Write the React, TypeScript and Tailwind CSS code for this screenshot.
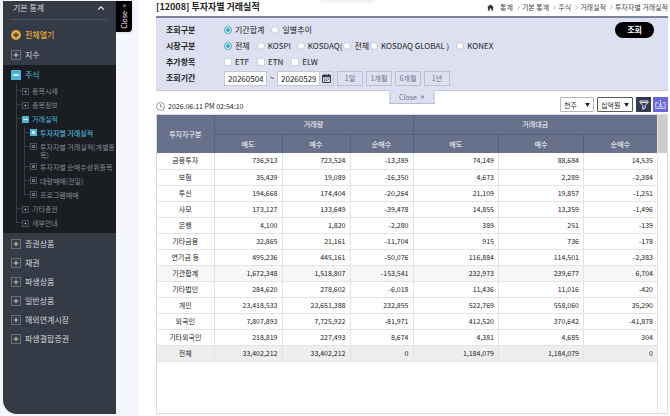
import { useState } from "react";
import type { ReactNode } from "react";
import { ChevronRight, ChevronUp } from "lucide-react";

// 상품군 메뉴
const BOTTOM_MENUS = ["증권상품", "채권", "파생상품", "일반상품", "해외연계시장", "파생결합증권"];

const TRADE_MENUS = [
  "투자자별 거래실적",
  "투자자별 거래실적(개별종목)",
  "투자자별 순매수상위종목",
  "대량매매(전일)",
  "프로그램매매",
];

const BREADCRUMBS = ["통계", "기본 통계", "주식", "거래실적", "투자자별 거래실적"];

const PERIODS = ["1일", "1개월", "6개월", "1년"];

// 투자자구분, 거래량(매도/매수/순매수), 거래대금(매도/매수/순매수)
const ROWS = [
  ["금융투자", "736,913", "723,524", "-13,389", "74,149", "88,684", "14,535"],
  ["보험", "35,439", "19,089", "-16,350", "4,673", "2,289", "-2,384"],
  ["투신", "194,668", "174,404", "-20,264", "21,109", "19,857", "-1,251"],
  ["사모", "173,127", "133,649", "-39,478", "14,855", "13,359", "-1,496"],
  ["은행", "4,100", "1,820", "-2,280", "389", "251", "-139"],
  ["기타금융", "32,865", "21,161", "-11,704", "915", "736", "-178"],
  ["연기금 등", "495,236", "445,161", "-50,076", "116,884", "114,501", "-2,383"],
  ["기관합계", "1,672,348", "1,518,807", "-153,541", "232,973", "239,677", "6,704"],
  ["기타법인", "284,620", "278,602", "-6,018", "11,436", "11,016", "-420"],
  ["개인", "23,418,533", "23,651,388", "232,855", "522,769", "558,060", "35,290"],
  ["외국인", "7,807,893", "7,725,922", "-81,971", "412,520", "370,642", "-41,878"],
  ["기타외국인", "218,819", "227,493", "8,674", "4,381", "4,685", "304"],
  ["전체", "33,402,212", "33,402,212", "0", "1,184,079", "1,184,079", "0"],
];

function PlusBox() {
  return (
    <svg viewBox="0 0 10 10" className="size-[10px] shrink-0" fill="none">
      <rect x="0.5" y="0.5" width="9" height="9" stroke="#69707e" />
      <path d="M2.5 5h5M5 2.5v5" stroke="#c3c7cf" />
    </svg>
  );
}

function MinusBox({ className }: { className: string }) {
  return (
    <svg viewBox="0 0 10 10" className={`shrink-0 ${className}`}>
      <rect width="10" height="10" rx="0.5" fill="#4db4d6" />
      <rect x="2" y="4.3" width="6" height="1.4" fill="#fff" />
    </svg>
  );
}

function DotBox() {
  return (
    <svg viewBox="0 0 7 7" className="size-[7px] shrink-0" fill="none">
      <rect x="0.5" y="0.5" width="6" height="6" stroke="#4b5263" />
      <rect x="2.7" y="2.7" width="1.6" height="1.6" fill="#b9bdc6" />
    </svg>
  );
}

function PageBox({ active }: { active: boolean }) {
  return (
    <svg viewBox="0 0 7 7" className="size-[7px] shrink-0" fill="none">
      <rect x="0.5" y="0.5" width="6" height="6" fill={active ? "#4db4d6" : "none"} stroke={active ? "#4db4d6" : "#4b5263"} />
      <path d="M2 2.5h3M2 3.5h3M2 4.5h3" stroke={active ? "#fff" : "#8d93a0"} strokeWidth="0.7" />
    </svg>
  );
}

// 트리 연결선이 붙는 메뉴 한 줄
function TreeItem({ last, children }: { last?: boolean; children: ReactNode }) {
  return (
    <li className="flex">
      <span className="flex w-[6px] shrink-0 flex-col">
        <span className="h-[7px] border-b border-l border-[#363c48]" />
        {!last && <span className="flex-1 border-l border-[#363c48]" />}
      </span>
      <div className="min-w-0 flex-1">{children}</div>
    </li>
  );
}

function Sidebar() {
  return (
    <nav className="flex w-[113px] flex-col rounded-bl-[14px] bg-[#343a46] text-[8px] leading-[10px] text-[#d5d8de]">
      <button className="mx-2 flex h-[19px] items-center justify-between border-b border-[#4a505c] pr-[2px] pb-[4px] pl-[2px] text-left">
        기본 통계
        <ChevronUp className="size-[10px]" strokeWidth={3} />
      </button>
      <a href="#all" className="mt-[4px] flex h-[21px] items-center gap-1 pl-2 font-medium text-[#e5aa3c]">
        <svg viewBox="0 0 10 10" className="size-[10px]">
          <circle cx="5" cy="5" r="5" fill="#e5aa3c" />
          <path d="M2.4 5h5.2M5 2.4v5.2" stroke="#343a46" strokeWidth="1.3" />
        </svg>
        전체열기
      </a>
      <a href="#index" className="flex h-5 items-center gap-1 pl-2">
        <PlusBox />
        지수
      </a>

      {/* 펼쳐진 주식 메뉴 */}
      <div className="bg-[#1a1d22] pt-px pb-[3px] text-[7px] text-[#868b95]">
        <a href="#stock" className="flex h-[18px] items-center gap-1 pl-2 text-[8px] text-[#4db4d6]">
          <MinusBox className="size-[10px]" />
          주식
        </a>
        <ul className="pl-[13px]">
          {["종목시세", "종목정보"].map((name) => (
            <TreeItem key={name}>
              <a href="#item" className="flex h-[14px] items-center gap-[3px]">
                <DotBox />
                {name}
              </a>
            </TreeItem>
          ))}
          <TreeItem>
            <a href="#trade" className="flex h-[14px] items-center gap-[3px] text-[#4db4d6]">
              <MinusBox className="size-[7px]" />
              거래실적
            </a>
            <ul className="pl-[2px]">
              {TRADE_MENUS.map((name, i) => (
                <TreeItem key={name} last={i === TRADE_MENUS.length - 1}>
                  <a
                    href="#trade-item"
                    className={
                      i === 0
                        ? "flex min-h-[14px] gap-[3px] pt-[3px] leading-[8px] font-medium text-[#4db4d6]"
                        : "flex min-h-[14px] gap-[3px] pt-[3px] pb-px leading-[8px]"
                    }
                  >
                    <PageBox active={i === 0} />
                    <span className="break-all">{name}</span>
                  </a>
                </TreeItem>
              ))}
            </ul>
          </TreeItem>
          {["기타증권", "세부안내"].map((name, i) => (
            <TreeItem key={name} last={i === 1}>
              <a href="#etc" className="flex h-[14px] items-center gap-[3px]">
                <DotBox />
                {name}
              </a>
            </TreeItem>
          ))}
        </ul>
      </div>

      <ul className="space-y-[9px] pt-[6px]">
        {BOTTOM_MENUS.map((name) => (
          <li key={name}>
            <a href="#menu" className="flex items-center gap-1 pl-2">
              <PlusBox />
              {name}
            </a>
          </li>
        ))}
      </ul>
    </nav>
  );
}

function Radio({ name, label, defaultChecked, className }: { name: string; label: string; defaultChecked?: boolean; className?: string }) {
  return (
    <label className={`flex items-center gap-[3px] whitespace-nowrap ${className ?? ""}`}>
      <input
        type="radio"
        name={name}
        defaultChecked={defaultChecked}
        className="size-2 shrink-0 appearance-none rounded-full border border-[#c3c7d6] bg-white checked:border-[#56b5cd] checked:bg-[#35a5c3] checked:shadow-[inset_0_0_0_1px_white]"
      />
      {label}
    </label>
  );
}

function Field({ label, children }: { label: string; children: ReactNode }) {
  return (
    <div role="group" aria-label={label} className="flex h-4 items-center">
      <span className="w-[58px] shrink-0 font-bold">{label}</span>
      {children}
    </div>
  );
}

function UnitSelect({ label, options, className }: { label: string; options: string[]; className: string }) {
  return (
    <div className="relative">
      <select aria-label={label} className={`h-[15px] appearance-none rounded-[1px] border bg-white pl-[3px] text-[7px] leading-[12px] ${className}`}>
        {options.map((o) => (
          <option key={o}>{o}</option>
        ))}
      </select>
      <svg viewBox="0 0 6 5" className="pointer-events-none absolute top-[6px] right-1 h-1 w-[5px]">
        <path d="M0 0h6L3 5z" fill="#222" />
      </svg>
    </div>
  );
}

function SearchPanel() {
  const [from, setFrom] = useState("20260504");
  const [to, setTo] = useState("20260529");

  return (
    <form onSubmit={(e) => e.preventDefault()} className="relative flex items-start justify-between border-t-2 border-b border-t-[#7d8496] border-b-[#c4c8dc] bg-[#dde0f0] py-1 pr-[14px] pl-[10px]">
      <div>
        <Field label="조회구분">
          <Radio name="type" label="기간합계" defaultChecked />
          <Radio name="type" label="일별추이" className="ml-[7px]" />
        </Field>
        <Field label="시장구분">
          <Radio name="market" label="전체" defaultChecked />
          <Radio name="market" label="KOSPI" className="ml-[7px]" />
          <Radio name="market" label="KOSDAQ(" className="ml-[6px]" />
          <Radio name="kosdaq" label="전체" className="ml-px" />
          <Radio name="kosdaq" label="KOSDAQ GLOBAL )" className="ml-px" />
          <Radio name="market" label="KONEX" className="ml-[7px]" />
        </Field>
        <Field label="추가항목">
          {["ETF", "ETN", "ELW"].map((name) => (
            <label key={name} className="mr-2 flex items-center gap-[3px]">
              <input type="checkbox" className="size-2 appearance-none border border-[#d0d3e0] bg-white checked:bg-[#35a5c3]" />
              {name}
            </label>
          ))}
        </Field>
        <Field label="조회기간">
          <input aria-label="시작일" value={from} onChange={(e) => setFrom(e.target.value)} className="h-[15px] w-[43px] border border-[#c4c8d4] bg-white px-[3px]" />
          <span className="w-[10px] text-center">~</span>
          <input aria-label="종료일" value={to} onChange={(e) => setTo(e.target.value)} className="h-[15px] w-[43px] border border-[#c4c8d4] bg-white px-[3px]" />
          <button type="button" aria-label="달력" className="flex h-[15px] w-[14px] items-center justify-center border border-l-0 border-[#c4c8d4]">
            <svg viewBox="0 0 9 9" className="size-[9px]">
              <path d="M0.5 1.2h8v7.3h-8z" fill="none" stroke="#333b4d" />
              <path d="M0.5 1h8v2.2h-8zM2 0h1v2H2zM6 0h1v2H6z" fill="#333b4d" />
              <path d="M2 5h1.2M4 5h1.2M6 5h1.2M2 6.8h1.2M4 6.8h1.2" stroke="#333b4d" />
            </svg>
          </button>
          {PERIODS.map((p) => (
            <button key={p} type="button" className="ml-[3px] h-[15px] w-[26px] border border-[#bcc1d2] text-[7px] text-[#6d7385]">
              {p}
            </button>
          ))}
        </Field>
      </div>
      <button type="submit" className="h-4 w-[39px] rounded-full bg-black font-bold text-white">
        조회
      </button>
      {/* 검색 영역 접기 */}
      <button type="button" className="absolute top-full left-1/2 flex h-[14px] w-[45px] -translate-x-1/2 items-center justify-center gap-1 border-r border-b border-l border-[#b9bdd3] bg-[#dde0f0] text-[7px] text-[#6d7385]">
        Close
        <svg viewBox="0 0 5 5" className="size-[4px]">
          <path d="M0.5 0.5l4 4M4.5 0.5l-4 4" stroke="#555b6d" />
        </svg>
      </button>
    </form>
  );
}

function ResultTable() {
  return (
    <div className="flex flex-1 border border-[#d9dbe0]">
      <div className="flex-1 border-r border-[#e2e3e6]">
        <table className="w-full table-fixed border-collapse text-[7px] leading-[10px]">
          <colgroup>
            <col className="w-[11.4%]" />
            <col className="w-[13.6%]" />
            <col className="w-[13.6%]" />
            <col className="w-[12.6%]" />
            <col className="w-[17.1%]" />
            <col className="w-[17%]" />
            <col className="w-[14.7%]" />
          </colgroup>
          <thead className="bg-[#68718c] text-white">
            <tr className="h-[19px]">
              <th rowSpan={2} className="border-r border-[#59617a] font-normal">투자자구분</th>
              <th colSpan={3} className="border-r border-b border-[#59617a] font-normal">거래량</th>
              <th colSpan={3} className="border-b border-[#59617a] font-normal">거래대금</th>
            </tr>
            <tr className="h-[19px]">
              {["매도", "매수", "순매수", "매도", "매수", "순매수"].map((h, i) => (
                <th key={i} className="border-r border-[#59617a] font-normal last:border-r-0">{h}</th>
              ))}
            </tr>
          </thead>
          <tbody>
            {ROWS.map((row) => (
              <tr
                key={row[0]}
                className={
                  row[0] === "전체" ? "h-4 bg-[#eeeeee]" : row[0] === "기관합계" ? "h-4 bg-[#f7f7f7]" : "h-4"
                }
              >
                {row.map((cell, i) => (
                  <td
                    key={i}
                    className={
                      i === 0
                        ? "border-r border-b border-[#e2e3e6] pb-px text-center"
                        : "border-r border-b border-[#e2e3e6] pr-1 pb-px text-right last:border-r-0"
                    }
                  >
                    {cell}
                  </td>
                ))}
              </tr>
            ))}
          </tbody>
        </table>
      </div>
      <div className="w-[9px]">
        <div className="h-[38px] bg-[#cccccc]" />
      </div>
    </div>
  );
}

export default function App() {
  return (
    <div className="flex min-h-screen bg-white font-['Noto_Sans_CJK_KR',sans-serif] text-[#222]">
      <aside className="flex w-[139px] shrink-0 items-stretch bg-[#f5f6fb] pt-px pb-[2px] pl-[3px]">
        <Sidebar />
        <button className="flex h-[31px] w-4 items-center justify-center rounded-br-[4px] bg-black text-[7px] text-white shadow-sm">
          <span className="flex rotate-180 items-center gap-[3px] whitespace-nowrap [writing-mode:vertical-rl]">
            Close
            <svg viewBox="0 0 5 5" className="size-[4px]">
              <path d="M0.5 0.5l4 4M4.5 0.5l-4 4" stroke="#ccc" />
            </svg>
          </span>
        </button>
      </aside>

      <main className="relative flex min-w-0 flex-1 flex-col overflow-hidden pr-[2px] pb-[2px] pl-[17px] text-[8px] leading-[12px]">
        {/* 상단 메뉴의 그림자 */}
        <div className="absolute bottom-full left-[34%] h-2 w-[54px] shadow-[0_0_6px_rgba(0,0,0,0.15)]" />
        <header className="flex h-4 items-center justify-between pb-[2px]">
          <h1 className="text-[9px] font-bold">[12008] 투자자별 거래실적</h1>
          <nav className="flex items-center gap-[2px] text-[7px] text-[#444]">
            <a href="#home" aria-label="홈" className="mr-1">
              <svg viewBox="0 0 7 7" className="size-[7px]">
                <path d="M3.5 0.4L7 3.3H6.1V6.6H4.4V4.4H2.6V6.6H0.9V3.3H0z" fill="#333" />
              </svg>
            </a>
            {BREADCRUMBS.map((name, i) => (
              <span key={name} className="flex items-center">
                {i > 0 && <ChevronRight className="size-[7px] text-[#777]" />}
                <a href="#crumb">{name}</a>
              </span>
            ))}
          </nav>
        </header>

        <SearchPanel />

        {/* 조회 시각, 단위 선택 */}
        <div className="flex h-[23px] items-start justify-between pt-[6px]">
          <div className="flex h-[18px] items-center gap-[3px] text-[7px]">
            <svg viewBox="0 0 9 9" className="size-[9px]" fill="none" stroke="#777d8a" strokeWidth="0.8">
              <circle cx="4.5" cy="4.5" r="4" />
              <path d="M4.5 2v2.7h2" />
            </svg>
            2026.06.11 PM 02:54:10
          </div>
          <div className="flex gap-[3px]">
            <UnitSelect label="거래량 단위" options={["천주", "주"]} className="w-[34px] border-[#b5b8c0]" />
            <UnitSelect label="거래대금 단위" options={["십억원", "백만원"]} className="w-9 border-[#555a66]" />
            <button aria-label="필터" className="flex h-[15px] w-[15px] items-center justify-center bg-[#343b50]">
              <svg viewBox="0 0 10 10" className="size-[10px]" fill="none" stroke="#fff" strokeWidth="0.9">
                <path d="M1 1h8v1.4L6.2 5.6V8L3.8 9.2V5.6L1 2.4zM1.4 2.6h7.2" />
              </svg>
            </button>
            <button aria-label="다운로드" className="-ml-px flex h-[15px] w-[15px] items-center justify-center bg-[#6a66dc]">
              <svg viewBox="0 0 11 11" className="size-[11px]" fill="none" stroke="#e4e3fb" strokeWidth="0.9">
                <path d="M5.5 0.8v5.6M3.4 4.4l2.1 2.1 2.1-2.1M3 3.6H0.8v5.8h9.4V3.6H8" />
                <path d="M2.6 7.7h5.8" />
              </svg>
            </button>
          </div>
        </div>

        <ResultTable />
      </main>
    </div>
  );
}
